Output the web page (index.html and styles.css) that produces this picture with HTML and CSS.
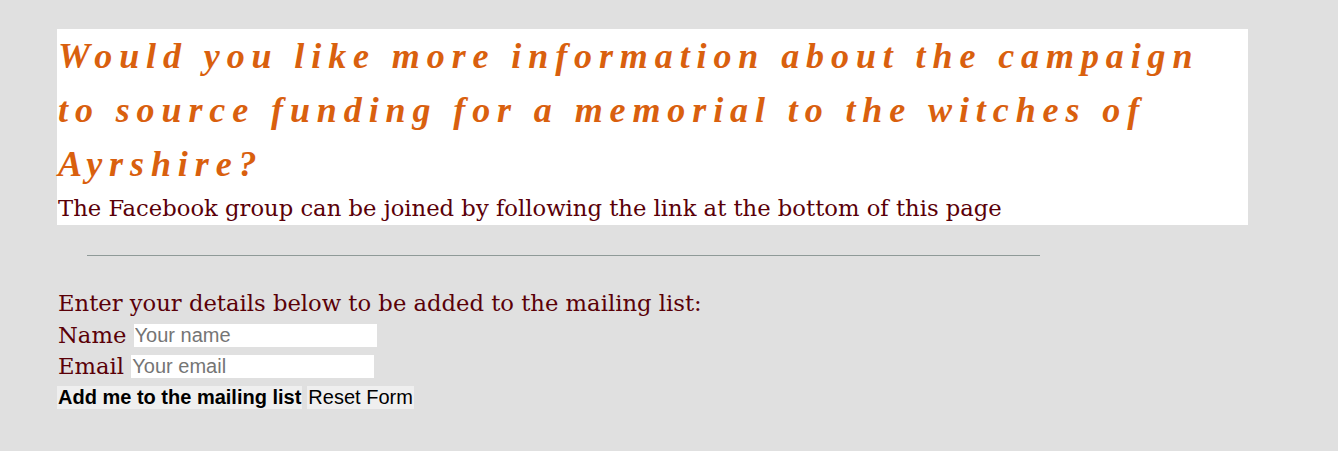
FILE: index.html
```html
<!DOCTYPE html>
<html>
<head>
<meta charset="utf-8">
<link rel="stylesheet" href="styles.css">
</head>
<body>
<section class="intro">
  <h2 class="headline">Would you like more information about the campaign to source funding for a memorial to the witches of Ayrshire?</h2>
  <p class="lead">The Facebook group can be joined by following the link at the bottom of this page</p>
</section>
<hr class="divider">
<form class="signup">
  <p class="prompt">Enter your details below to be added to the mailing list:</p>
  <div class="row"><label class="lbl" for="n">Name</label> <input class="field" id="n" type="text" placeholder="Your name"></div>
  <div class="row"><label class="lbl" for="e">Email</label> <input class="field" id="e" type="email" placeholder="Your email"></div>
  <div class="actions"><button class="btn btn-submit" type="submit">Add me to the mailing list</button> <button class="btn" type="reset">Reset Form</button></div>
</form>
</body>
</html>
```
FILE: styles.css
```css
html, body {
  margin: 0;
  padding: 0;
}
body {
  background: #e0e0e0;
  padding: 29px 0 0 57px;
  font-family: "DejaVu Serif", serif;
}
.intro {
  background: #ffffff;
  width: 1191px;
}
.headline {
  margin: 0;
  padding-left: 1px;
  font-family: "Liberation Serif", serif;
  font-style: italic;
  font-weight: bold;
  font-size: 36px;
  line-height: 54px;
  letter-spacing: 6.9px;
  color: #d9600e;
}
.lead {
  margin: 0;
  padding-left: 1px;
  font-size: 22.7px;
  line-height: 34px;
  color: #5a0008;
}
.divider {
  margin: 30px 0 0 30px;
  width: 953px;
  height: 0;
  border: 0;
  border-top: 1px solid #8f9a98;
}
.signup {
  margin-top: 31px;
  padding-left: 1px;
}
.prompt {
  margin: 0;
  font-size: 22.7px;
  line-height: 33px;
  color: #5a0008;
}
.row {
  font-size: 22.7px;
  line-height: 31px;
  color: #5a0008;
}
.field {
  font-family: "Liberation Sans", sans-serif;
  font-size: 20px;
  width: 243px;
  height: 23px;
  box-sizing: border-box;
  border: 0;
  padding: 0 1px;
  background: #fff;
  vertical-align: 1px;
}
.field::placeholder {
  color: #757575;
}
.actions {
  margin: 4px 0 0 -1px;
  display: flex;
  gap: 5px;
}
.btn {
  font-family: "Liberation Sans", sans-serif;
  font-size: 20px;
  height: 23px;
  border: 0;
  padding: 0 1px;
  background: #efefef;
  color: #000;
  line-height: 23px;
}
.btn-submit {
  font-weight: bold;
}
```
